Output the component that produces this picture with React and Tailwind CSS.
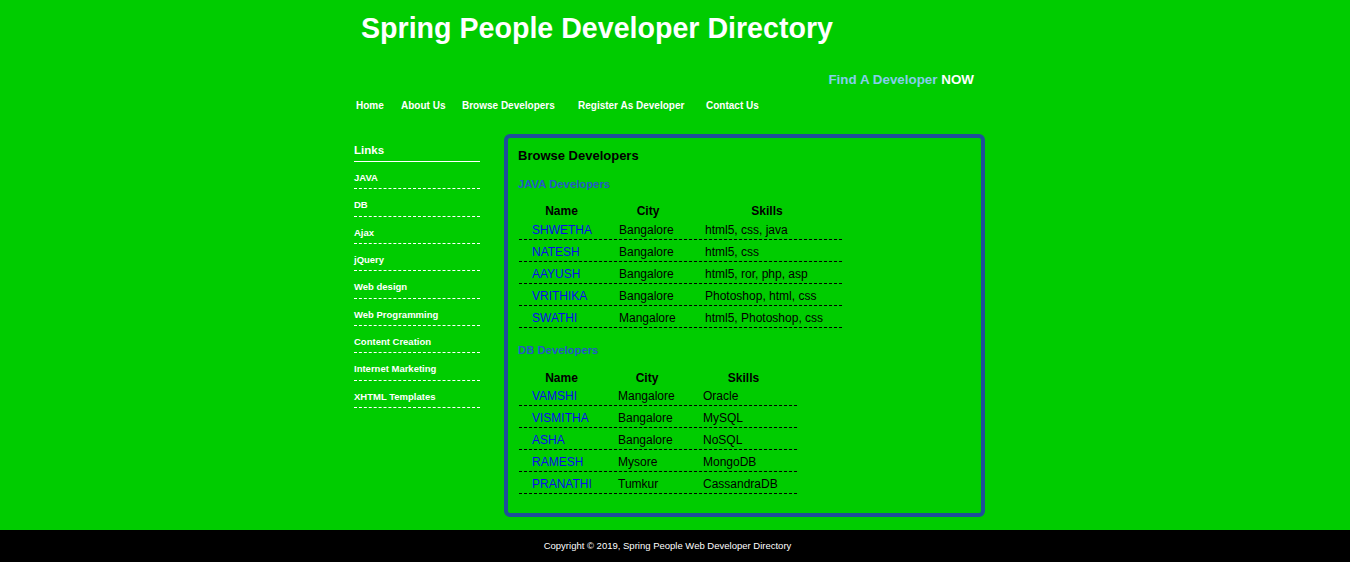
import React from "react";

const javaDevs = [
  ["SHWETHA", "Bangalore", "html5, css, java"],
  ["NATESH", "Bangalore", "html5, css"],
  ["AAYUSH", "Bangalore", "html5, ror, php, asp"],
  ["VRITHIKA", "Bangalore", "Photoshop, html, css"],
  ["SWATHI", "Mangalore", "html5, Photoshop, css"],
];

const dbDevs = [
  ["VAMSHI", "Mangalore", "Oracle"],
  ["VISMITHA", "Bangalore", "MySQL"],
  ["ASHA", "Bangalore", "NoSQL"],
  ["RAMESH", "Mysore", "MongoDB"],
  ["PRANATHI", "Tumkur", "CassandraDB"],
];

const links = [
  "JAVA",
  "DB",
  "Ajax",
  "jQuery",
  "Web design",
  "Web Programming",
  "Content Creation",
  "Internet Marketing",
  "XHTML Templates",
];

const nav = [
  ["Home", "w-[45px]"],
  ["About Us", "w-[61px]"],
  ["Browse Developers", "w-[116px]"],
  ["Register As Developer", "w-[128px]"],
  ["Contact Us", "w-[80px]"],
];

function DevTable({ rows, widths, total, cityPad, headPad }) {
  return (
    <div className={`${total} ml-[1px] text-[12px] leading-[14px]`}>
      <div className={`h-[18px] ${headPad} flex items-center font-bold text-black`}>
        <div className={`${widths[0]} text-center`}>Name</div>
        <div className={`${widths[1]} text-center`}>City</div>
        <div className={`${widths[2]} text-center`}>Skills</div>
      </div>
      {rows.map((r) => (
        <div
          key={r[0]}
          className="h-[22px] box-border pt-[3px] flex items-center border-b border-dashed border-black"
        >
          <div className={`${widths[0]} pl-[13px] text-[#0a0af0]`}>{r[0]}</div>
          <div className={`${widths[1]} ${cityPad} text-black`}>{r[1]}</div>
          <div className={`${widths[2]} pl-[13px] text-black`}>{r[2]}</div>
        </div>
      ))}
    </div>
  );
}

export default function App() {
  return (
    <div
      className="w-[1350px] h-[562px] flex flex-col bg-[#00cc00]"
      style={{ fontFamily: '"Liberation Sans", Arial, sans-serif' }}
    >
      <div className="w-[642px] mx-auto flex flex-col flex-1">
        <h1 className="pt-[12px] pl-[7px] text-[28.6px] leading-[32px] font-bold text-white">
          Spring People Developer Directory
        </h1>
        <div className="mt-[28px] pr-[22px] text-right text-[13.4px] leading-[16px] font-bold">
          <span className="text-[#87ceeb]">Find A Developer </span>
          <span className="text-white">NOW</span>
        </div>
        <nav className="mt-[12px] pl-[2px] flex text-[10px] leading-[12px] font-bold text-white">
          {nav.map(([t, w]) => (
            <a key={t} className={`${w} whitespace-nowrap`}>
              {t}
            </a>
          ))}
        </nav>
        <div className="mt-[22px] flex gap-[24px]">
          <aside className="w-[126px] pt-[9px] text-white">
            <div className="pb-[4px] border-b border-white text-[11.5px] leading-[14px] font-bold">
              Links
            </div>
            <ul>
              {links.map((l) => (
                <li
                  key={l}
                  className="h-[27.33px] box-border border-b border-dashed border-white pt-[10px] text-[9.5px] leading-[11px] font-bold"
                >
                  {l}
                </li>
              ))}
            </ul>
          </aside>
          <section className="w-[481px] h-[383px] box-border border-[4px] border-[#1f4e9a] rounded-[6px] pt-[10px] pl-[10px]">
            <h2 className="text-[13px] leading-[15px] font-bold text-black">Browse Developers</h2>
            <h3 className="mt-[15px] text-[11.3px] leading-[12px] font-bold text-[#2358c8]">
              JAVA Developers
            </h3>
            <div className="mt-[10px]">
              <DevTable
                rows={javaDevs}
                widths={["w-[85px]", "w-[88px]", "w-[150px]"]}
                total="w-[323px]"
                cityPad="pl-[15px]"
                headPad="pt-[4px]"
              />
            </div>
            <h3 className="mt-[16px] text-[11.3px] leading-[12px] font-bold text-[#2358c8]">
              DB Developers
            </h3>
            <div className="mt-[10px]">
              <DevTable
                rows={dbDevs}
                widths={["w-[85px]", "w-[86px]", "w-[107px]"]}
                total="w-[278px]"
                cityPad="pl-[14px]"
                headPad="pt-[6px]"
              />
            </div>
          </section>
        </div>
      </div>
      <footer className="h-[32px] bg-black flex items-center justify-center pr-[15px] text-[9.5px] text-white">
        Copyright © 2019, Spring People Web Developer Directory
      </footer>
    </div>
  );
}
